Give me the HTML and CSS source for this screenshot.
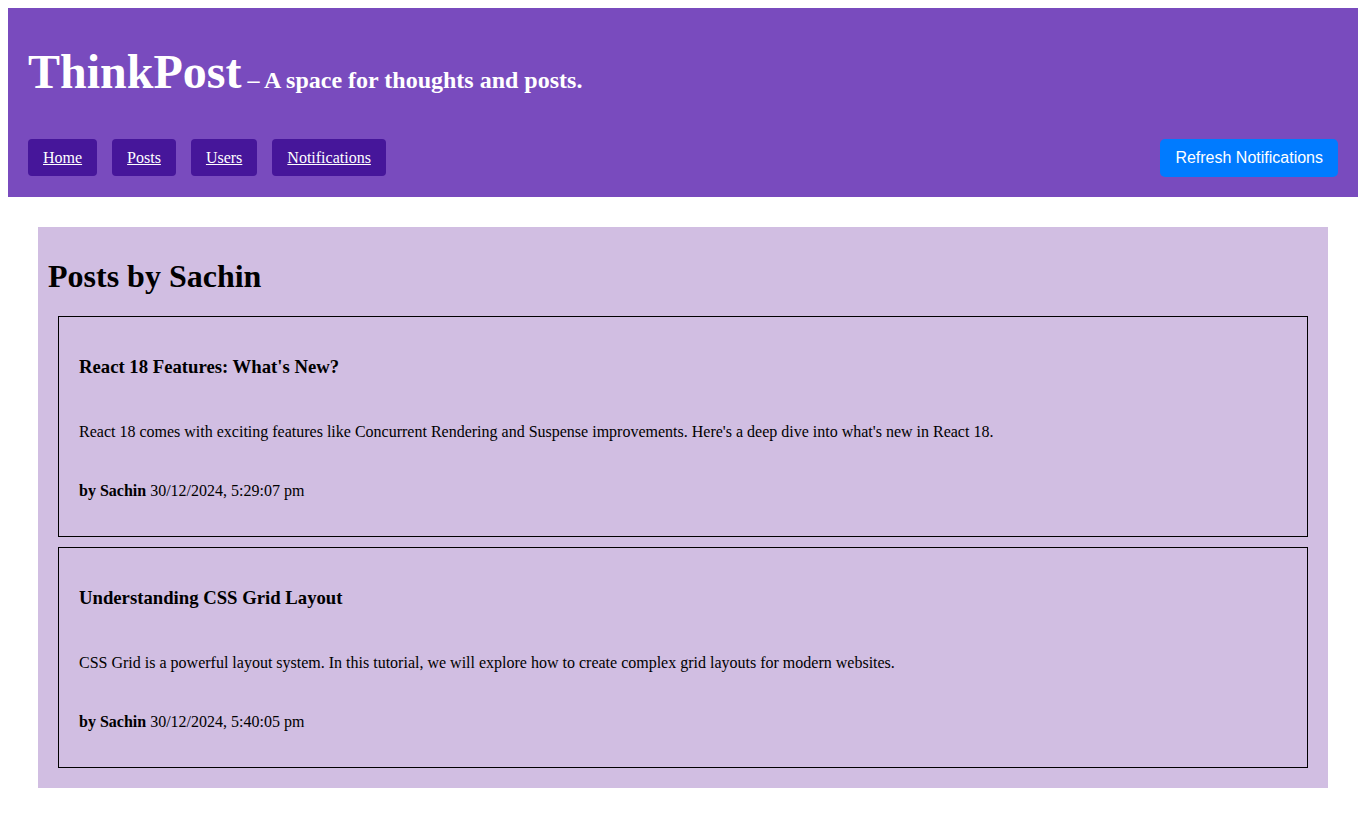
FILE: index.html
```html
<!DOCTYPE html>
<html lang="en">
<head>
<meta charset="utf-8">
<title>ThinkPost</title>
<link rel="stylesheet" href="styles.css">
</head>
<body>
<header class="site-header">
  <h1 class="brand">ThinkPost<span class="tagline"> – A space for thoughts and posts.</span></h1>
  <div class="nav-row">
    <nav class="nav">
      <a class="nav-link" href="#">Home</a>
      <a class="nav-link" href="#">Posts</a>
      <a class="nav-link" href="#">Users</a>
      <a class="nav-link" href="#">Notifications</a>
    </nav>
    <button class="refresh-btn" type="button">Refresh Notifications</button>
  </div>
</header>
<section class="user-posts">
  <h2 class="user-posts-title">Posts by Sachin</h2>
  <article class="post-card">
    <h3 class="post-title">React 18 Features: What's New?</h3>
    <p class="post-body">React 18 comes with exciting features like Concurrent Rendering and Suspense improvements. Here's a deep dive into what's new in React 18.</p>
    <p class="post-meta"><b>by Sachin</b> 30/12/2024, 5:29:07 pm</p>
  </article>
  <article class="post-card">
    <h3 class="post-title">Understanding CSS Grid Layout</h3>
    <p class="post-body">CSS Grid is a powerful layout system. In this tutorial, we will explore how to create complex grid layouts for modern websites.</p>
    <p class="post-meta"><b>by Sachin</b> 30/12/2024, 5:40:05 pm</p>
  </article>
</section>
</body>
</html>
```
FILE: styles.css
```css
html, body {
  background: #ffffff;
}
body {
  margin: 8px;
  font-family: "Liberation Serif", "Times New Roman", serif;
  font-size: 16px;
  color: #000000;
}

.site-header {
  background: #794bbe;
  padding: 20px;
}
.brand {
  margin: 16px 0 0;
  font-size: 48px;
  font-weight: bold;
  color: #ffffff;
  line-height: 55px;
}
.tagline {
  font-size: 24px;
  line-height: 1;
}
.nav-row {
  display: flex;
  justify-content: space-between;
  align-items: flex-start;
  margin-top: 40px;
}
.nav {
  display: flex;
  gap: 15px;
}
.nav-link {
  display: block;
  background: #46169a;
  color: #ffffff;
  text-decoration: underline;
  padding: 10px 15px;
  line-height: 17px;
  border-radius: 4px;
}
.refresh-btn {
  background: #007bff;
  color: #ffffff;
  border: none;
  border-radius: 5px;
  padding: 10px 15px;
  font-family: "Liberation Sans", Arial, sans-serif;
  font-size: 16px;
  line-height: 18px;
  cursor: pointer;
}

.user-posts {
  margin: 30px;
  padding: 10px;
  background: #d1bee2;
}
.user-posts-title {
  margin: 21.44px 0 20.44px;
  font-size: 32px;
  line-height: 37px;
}
.post-card {
  margin: 10px;
  border: 1px solid #000000;
  padding: 20px;
}
.post-title {
  margin: 18.72px 0 0;
  font-size: 18.72px;
  line-height: 21.5px;
}
.post-body {
  margin: 45.5px 0 0;
  line-height: 18.4px;
}
.post-meta {
  margin: 41px 0 15.5px;
  line-height: 18.4px;
}
```
